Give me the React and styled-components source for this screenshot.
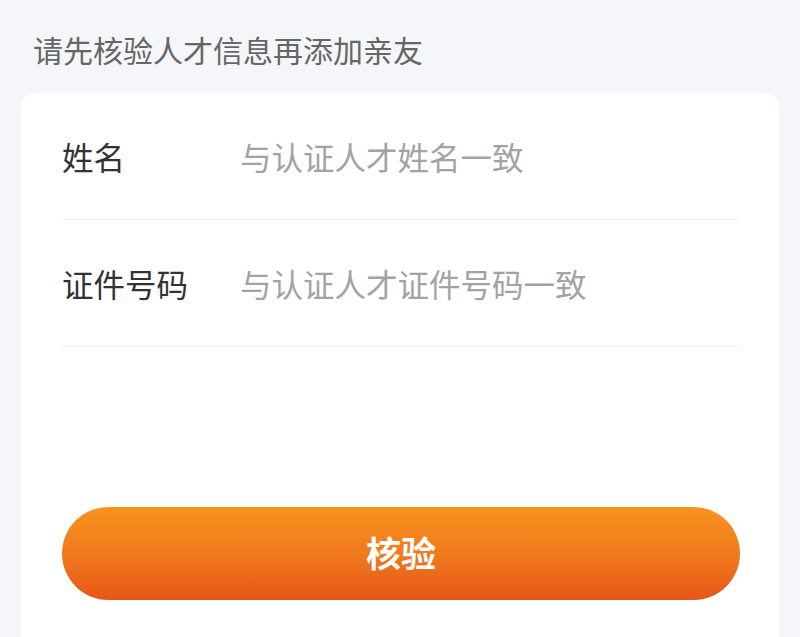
import React from "react";
import styled, { createGlobalStyle } from "styled-components";

const Global = createGlobalStyle`
  html, body { margin: 0; padding: 0; background: #f5f6fa; }
  body { font-family: "Noto Sans CJK SC", "Noto Sans", sans-serif; }
  * { box-sizing: border-box; }
`;

const Page = styled.div`
  width: 800px;
  height: 637px;
  overflow: hidden;
  background: #f5f6fa;
  display: flex;
  flex-direction: column;
`;

const Title = styled.div`
  padding: 29px 0 0 33px;
  height: 93px;
  font-size: 30px;
  line-height: 40px;
  color: #666;
`;

const Card = styled.div`
  margin: 0 21px;
  flex: 1;
  background: #fff;
  border-radius: 14px 14px 0 0;
  padding: 0 39px 0 41px;
  display: flex;
  flex-direction: column;
`;

const Row = styled.div`
  height: 127px;
  display: flex;
  align-items: center;
  border-bottom: 1px solid #f0f0f0;
  font-size: 31.5px;
`;

const Label = styled.div`
  width: 178px;
  color: #333;
`;

const Placeholder = styled.div`
  color: #a3a3a3;
`;

const Button = styled.button`
  margin-top: 160px;
  height: 93px;
  border: none;
  border-radius: 47px;
  background: linear-gradient(180deg, #f8931f 0%, #f07a1c 50%, #e6561a 100%);
  color: #fff;
  font-family: "Noto Sans CJK SC", sans-serif;
  font-size: 35px;
  font-weight: 700;
  display: flex;
  align-items: center;
  justify-content: center;
  padding: 0 0 4px;
`;

export default function App() {
  return (
    <Page>
      <Global />
      <Title>请先核验人才信息再添加亲友</Title>
      <Card>
        <Row>
          <Label>姓名</Label>
          <Placeholder>与认证人才姓名一致</Placeholder>
        </Row>
        <Row>
          <Label>证件号码</Label>
          <Placeholder>与认证人才证件号码一致</Placeholder>
        </Row>
        <Button>核验</Button>
      </Card>
    </Page>
  );
}
